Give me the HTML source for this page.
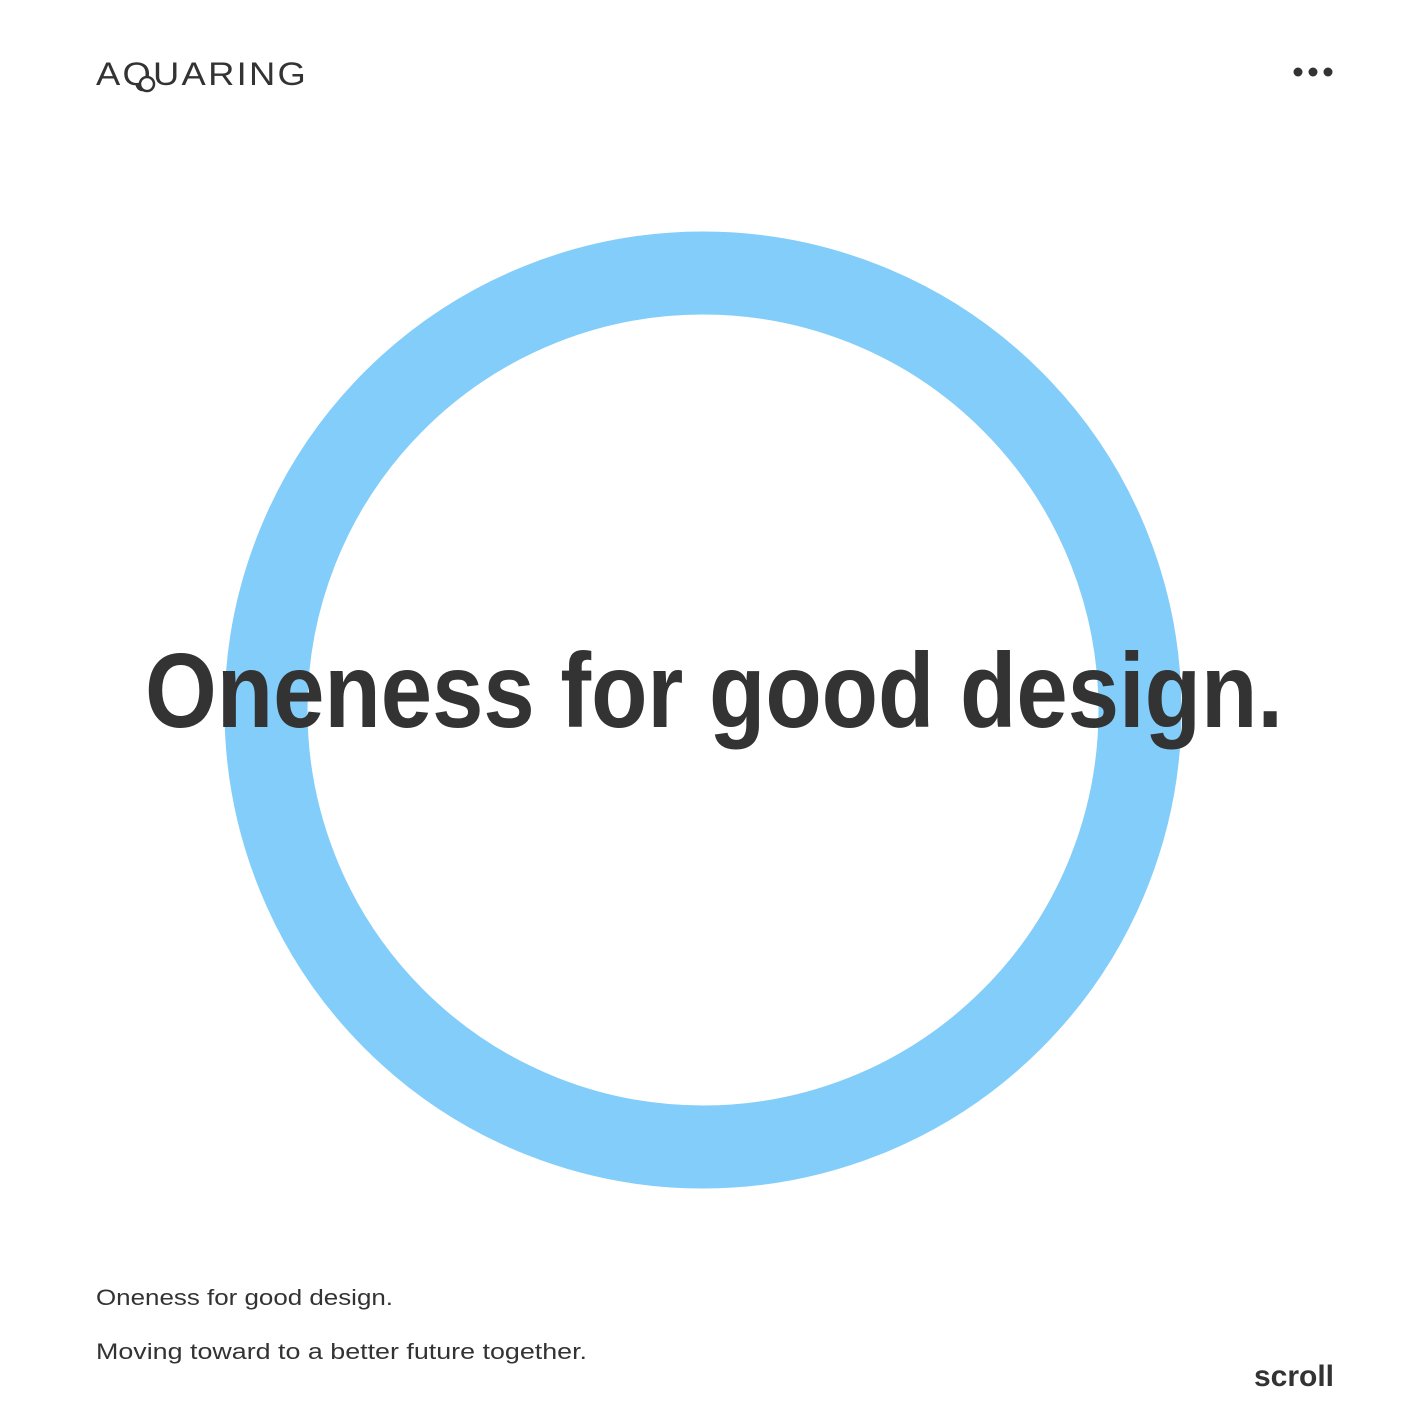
<!DOCTYPE html>
<html><head><meta charset="utf-8"><style>
html,body{margin:0;padding:0;background:#fff;width:1425px;height:1425px;overflow:hidden}
svg{display:block}
</style></head><body>
<svg width="1425" height="1425" viewBox="0 0 1425 1425" xmlns="http://www.w3.org/2000/svg">
<rect width="1425" height="1425" fill="#fff"/>
<circle cx="703" cy="710" r="437" fill="none" stroke="#82cdf9" stroke-width="83"/>
<text x="145" y="727" font-family="Liberation Sans, sans-serif" font-weight="bold" font-size="106" fill="#333" textLength="1138" lengthAdjust="spacingAndGlyphs">Oneness for good design.</text>
<text x="96" y="85" font-family="Liberation Sans, sans-serif" font-size="32" fill="#333" textLength="212" lengthAdjust="spacingAndGlyphs" letter-spacing="2">AQUARING</text>
<circle cx="147" cy="84" r="7" fill="#fff" stroke="#333" stroke-width="2.5"/>
<circle cx="1298" cy="72" r="4.5" fill="#333"/>
<circle cx="1313" cy="72" r="4.5" fill="#333"/>
<circle cx="1328" cy="72" r="4.5" fill="#333"/>
<text x="96" y="1305" font-family="Liberation Sans, sans-serif" font-size="22" fill="#333" textLength="297" lengthAdjust="spacingAndGlyphs">Oneness for good design.</text>
<text x="96" y="1359" font-family="Liberation Sans, sans-serif" font-size="22" fill="#333" textLength="491" lengthAdjust="spacingAndGlyphs">Moving toward to a better future together.</text>
<text x="1334" y="1386" text-anchor="end" font-family="Liberation Sans, sans-serif" font-weight="bold" font-size="30" fill="#333">scroll</text>
</svg>
</body></html>
